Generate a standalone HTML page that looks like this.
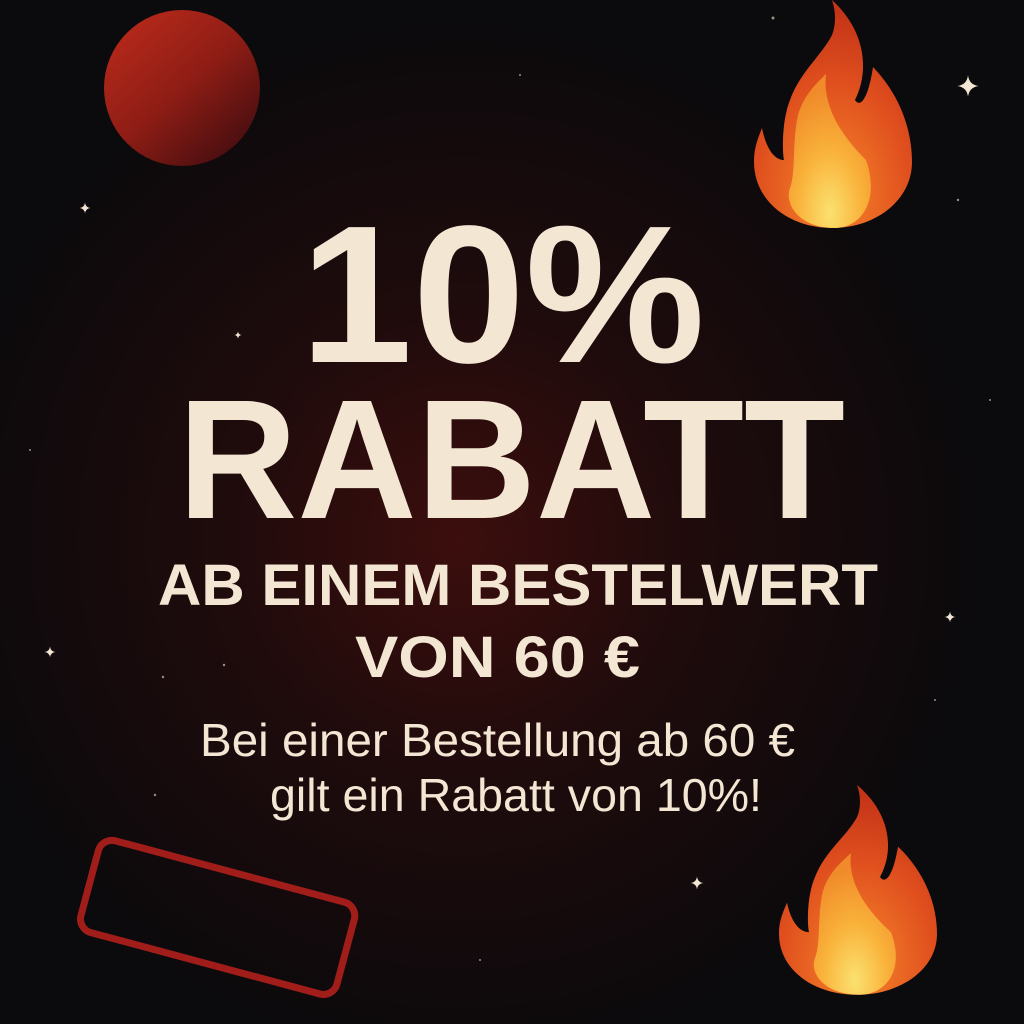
<!DOCTYPE html>
<html><head><meta charset="utf-8"><style>
html,body{margin:0;padding:0;background:#0b0a0c;}
svg{display:block}
</style></head><body>
<svg width="1024" height="1024" viewBox="0 0 1024 1024" xmlns="http://www.w3.org/2000/svg">
<defs>
<radialGradient id="bg" cx="460" cy="540" r="520" gradientUnits="userSpaceOnUse">
<stop offset="0" stop-color="#3c0e0d"/><stop offset="0.45" stop-color="#1f0b0c"/><stop offset="1" stop-color="#0b0a0c"/>
</radialGradient>
<linearGradient id="pl" x1="0.15" y1="0.1" x2="0.85" y2="0.9">
<stop offset="0" stop-color="#b4281a"/><stop offset="0.5" stop-color="#8e1d15"/><stop offset="1" stop-color="#4a0e10"/>
</linearGradient>
<radialGradient id="fo" cx="0.5" cy="0.85" r="0.8">
<stop offset="0" stop-color="#f6872a"/><stop offset="0.6" stop-color="#e0501e"/><stop offset="1" stop-color="#c43418"/>
</radialGradient>
<radialGradient id="fi" cx="0.5" cy="0.9" r="0.8">
<stop offset="0" stop-color="#fbe170"/><stop offset="0.5" stop-color="#f9b23a"/><stop offset="1" stop-color="#f08a2a"/>
</radialGradient>
<g id="sp"><path d="M0,-9 Q1,-1 9,0 Q1,1 0,9 Q-1,1 -9,0 Q-1,-1 0,-9Z" fill="#f3e6d3"/></g>
<g id="flame">
<path d="M832,228 C788,228 753,200 754,160 C754,148 758,138 762,128 C766,148 774,160 784,160 C782,150 782,120 790,100 C800,72 822,55 832,35 C836,25 836,12 832,0 C865,30 870,70 855,100 C860,108 868,100 873,67 C900,95 912,130 912,162 C912,200 876,228 832,228 Z" fill="url(#fo)"/>
<path d="M834,228 C800,228 784,205 790,188 C796,172 792,142 798,115 C804,95 815,85 826,74 C822,110 846,140 866,160 C880,200 862,228 834,228 Z" fill="url(#fi)"/>
</g>
</defs>
<rect width="1024" height="1024" fill="url(#bg)"/>
<circle cx="182" cy="88" r="78" fill="url(#pl)"/>
<use href="#flame"/>
<use href="#flame" transform="translate(25,785) scale(1,0.92)"/>
<rect x="85" y="870" width="265" height="95" rx="14" fill="none" stroke="#a11d1a" stroke-width="7" transform="rotate(15 218 918)"/>
<use href="#sp" transform="translate(968,86) scale(1.2)"/>
<use href="#sp" transform="translate(85,208) scale(0.6)"/>
<use href="#sp" transform="translate(238,335) scale(0.4)"/>
<use href="#sp" transform="translate(950,617) scale(0.6)"/>
<use href="#sp" transform="translate(50,652) scale(0.6)"/>
<use href="#sp" transform="translate(697,883) scale(0.7)"/>
<g fill="#d8c8b0" opacity="0.7">
<circle cx="773" cy="18" r="1.5"/><circle cx="958" cy="200" r="1.2"/><circle cx="224" cy="665" r="1.2"/><circle cx="163" cy="677" r="1.2"/><circle cx="155" cy="795" r="1.2"/><circle cx="520" cy="75" r="1"/><circle cx="990" cy="400" r="1"/><circle cx="30" cy="450" r="1"/><circle cx="935" cy="700" r="1"/><circle cx="480" cy="960" r="1"/>
</g>
<g fill="#f3e6d3" font-family="Liberation Sans, sans-serif" font-weight="bold">
<text x="300" y="362" font-size="196" textLength="405" lengthAdjust="spacingAndGlyphs">10%</text>
<text x="178" y="518" font-size="170" textLength="667" lengthAdjust="spacingAndGlyphs">RABATT</text>
<text x="158" y="605" font-size="58" textLength="720" lengthAdjust="spacingAndGlyphs">AB EINEM BESTELWERT</text>
<text x="355" y="677" font-size="58" textLength="285" lengthAdjust="spacingAndGlyphs">VON 60 €</text>
</g>
<g fill="#f3e6d3" font-family="Liberation Sans, sans-serif">
<text x="200" y="756" font-size="46" textLength="595" lengthAdjust="spacingAndGlyphs">Bei einer Bestellung ab 60 €</text>
<text x="270" y="811" font-size="46" textLength="492" lengthAdjust="spacingAndGlyphs">gilt ein Rabatt von 10%!</text>
</g>
</svg>
</body></html>
